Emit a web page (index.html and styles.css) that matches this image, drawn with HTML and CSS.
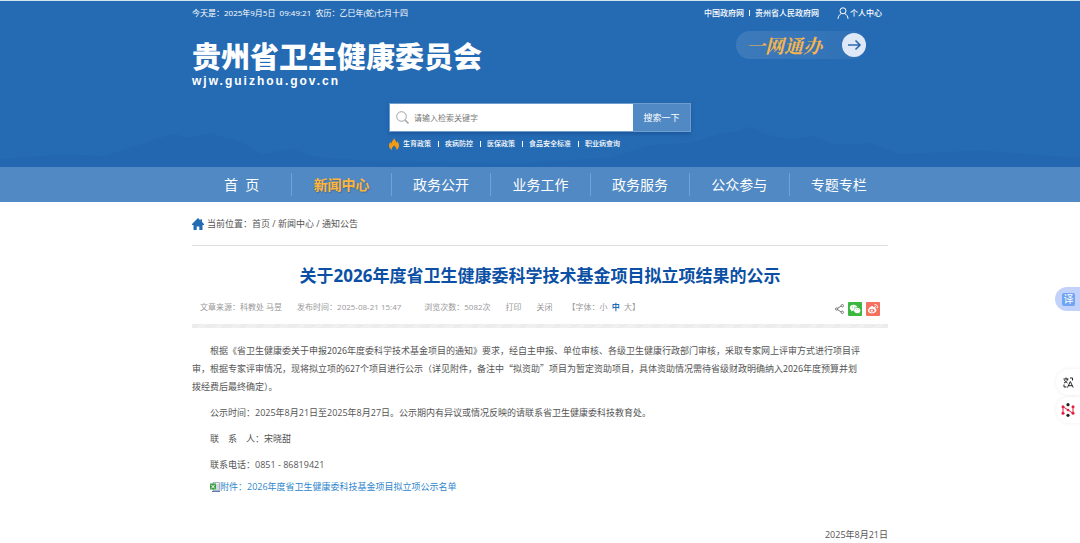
FILE: index.html
```html
<!DOCTYPE html>
<html lang="zh-CN">
<head>
<meta charset="utf-8">
<meta name="viewport" content="width=device-width, initial-scale=1">
<title>关于2026年度省卫生健康委科学技术基金项目拟立项结果的公示</title>
<link rel="stylesheet" href="styles.css">
</head>
<body>
<header class="header">
  <svg class="hills" viewBox="0 0 1080 70" preserveAspectRatio="none" aria-hidden="true">
    <path d="M0 62 L60 56 L105 58 L150 42 L172 34 L190 38 L210 33 L240 42 L262 56 L290 50 L320 60 L380 64 L520 66 L610 60 L650 46 L690 44 L720 34 L738 30 L752 26 L764 34 L790 40 L812 36 L836 46 L870 44 L900 56 L980 52 L1080 60 V70 H0 Z"/>
  </svg>
  <div class="wrap">
    <div class="topbar">
      <span>今天是：2025年9月5日&nbsp; 09:49:21&nbsp; 农历：乙巳年(蛇)七月十四</span>
      <nav class="toplinks" aria-label="相关网站">
        <a href="#">中国政府网</a><i class="bar"></i><a href="#">贵州省人民政府网</a>
        <a href="#" class="user">
          <svg width="12" height="12" viewBox="0 0 12 12" fill="none" stroke="currentColor" aria-hidden="true"><circle cx="6" cy="3.8" r="3"/><path d="M1 11.8c.2-3 2-4.600 3.400-5.200M7.600 6.600C9.600 7.400 10.900 9.200 11 11.800"/></svg>个人中心</a>
      </nav>
    </div>
    <div class="brand">
      <div>
        <div class="logo">贵州省卫生健康委员会</div>
        <div class="domain">wjw.guizhou.gov.cn</div>
      </div>
      <a href="#" class="service"><span>一网通办</span>
        <svg width="24" height="24" viewBox="0 0 24 24" fill="none" aria-hidden="true"><circle cx="12" cy="12" r="12" fill="#dfe8f6"/><path d="M6 12h12M13.500 7.500L18 12l-4.500 4.500" stroke="#2c69b0" stroke-width="1.600"/></svg>
      </a>
    </div>
    <div class="search">
      <form class="search-form">
        <label class="search-box">
          <svg width="13" height="13" viewBox="0 0 13 13" fill="none" stroke="#a0a0a0" aria-hidden="true"><circle cx="5.500" cy="5.500" r="4.800"/><path d="M9 9l3.500 3.500" stroke-width="1.400"/></svg>
          <input type="text" placeholder="请输入检索关键字" aria-label="检索关键字">
        </label>
        <button type="button">搜索一下</button>
      </form>
      <div class="hot">
        <svg width="10" height="12" viewBox="0 0 10 12" aria-hidden="true"><path fill="#f39a13" d="M5 0c.5 2 2.300 2.700 2.500 4.700.6-.3.800-.9.800-1.500C9.500 4.800 10 6.200 10 7.500c0 2-1.200 3.800-2.700 4.300.4-1.600-.8-2.900-2.200-4.300C3.700 9 2.400 10.200 2.900 11.900 1.100 11.200 0 9.600 0 7.600 0 6 .6 4.900 1.500 3.900c.1.800.4 1.300.9 1.600C2.400 3.200 4.800 2.200 5 0Z"/></svg>
        <a href="#">生育政策</a><i class="bar"></i><a href="#">疾病防控</a><i class="bar"></i><a href="#">医保政策</a><i class="bar"></i><a href="#">食品安全标准</a><i class="bar"></i><a href="#">职业病查询</a>
      </div>
    </div>
  </div>
</header>
<nav class="mainnav" aria-label="主导航">
  <div class="wrap tabs">
    <a href="#">首&nbsp; 页</a>
    <a href="#" class="active">新闻中心</a>
    <a href="#">政务公开</a>
    <a href="#">业务工作</a>
    <a href="#">政务服务</a>
    <a href="#">公众参与</a>
    <a href="#">专题专栏</a>
  </div>
</nav>
<main class="wrap">
  <div class="crumbs">
    <svg width="12" height="12" viewBox="0 0 12 12" fill="#236bb3" aria-hidden="true"><path d="M6 0l2.500 2.400V1.200H10v2.700l2 2V7h-1.500v5H7.300V8.500H4.700V12H1.500V7H0V5.900Z"/></svg>
    <span>当前位置：<a href="#">首页</a> / <a href="#">新闻中心</a> / <a href="#">通知公告</a></span>
  </div>
  <article>
    <h1>关于2026年度省卫生健康委科学技术基金项目拟立项结果的公示</h1>
    <div class="meta">
      <span>文章来源：科教处 马昱</span>
      <span class="published">发布时间：2025-08-21 15:47</span>
      <span>浏览次数：5082次</span>
      <a href="#">打印</a>
      <a href="#">关闭</a>
      <span class="sizes">【字体：<a href="#">小</a>&nbsp; <a href="#" class="current">中</a>&nbsp; <a href="#">大</a>】</span>
      <div class="share">
        <svg width="9" height="10" viewBox="0 0 9 10" fill="none" stroke="#777" aria-label="分享" role="img"><path d="M6.200 2L2.500 4.400M2.500 5.600L6.200 8"/><circle cx="1.700" cy="5" r="1.200"/><circle cx="7.300" cy="1.700" r="1.200"/><circle cx="7.300" cy="8.300" r="1.200"/></svg>
        <a href="#" aria-label="微信"><svg width="14" height="14" viewBox="0 0 14 14" aria-hidden="true"><rect width="14" height="14" rx="1" fill="#3bb83f"/><path fill="#fff" d="M5.600 2.800C3.500 2.800 1.800 4.100 1.800 5.800c0 1 .5 1.800 1.400 2.400L2.900 9.400l1.400-.7c.5.100.8.200 1.300.2 0-2.200 1.700-3.500 3.800-3.600C9 3.800 7.500 2.800 5.600 2.800Z"/><path fill="#fff" d="M9.200 5.800c1.900 0 3.300 1.200 3.300 2.700 0 .8-.4 1.500-1.100 2l.3 1.100-1.200-.6c-2.300.6-4.500-.7-4.500-2.500 0-1.500 1.400-2.700 3.200-2.700Z"/><g fill="#3bb83f"><circle cx="4.300" cy="4.900" r=".5"/><circle cx="6.900" cy="4.900" r=".5"/><circle cx="8.200" cy="7.700" r=".4"/><circle cx="10.300" cy="7.700" r=".4"/></g></svg></a>
        <a href="#" aria-label="微博"><svg width="14" height="14" viewBox="0 0 14 14" aria-hidden="true"><rect width="14" height="14" rx="1" fill="#f5705f"/><path fill="#fff" d="M5.900 4.100c.9-.3 1.500.2 1.200 1.300 1.500-.6 2.600-.2 2.200 1 2.500.9 1 4.700-3.400 4.900-2.300 0-3.900-1.100-3.900-2.600 0-1.700 2.300-4.200 3.900-4.600Z"/><ellipse cx="6" cy="8.600" rx="2.700" ry="1.800" fill="#f5705f"/><circle cx="5.800" cy="8.700" r="1.100" fill="#fff"/><path d="M8.500 2.700c2.100-.4 3.700 1.200 3.100 3.400M8.800 4.400c1.100-.1 1.600.5 1.300 1.400" fill="none" stroke="#fff" stroke-width=".9"/></svg></a>
      </div>
    </div>
    <div class="hatch"></div>
    <div class="body">
      <p class="lead">根据《省卫生健康委关于申报2026年度委科学技术基金项目的通知》要求，经自主申报、单位审核、各级卫生健康行政部门审核，采取专家网上评审方式进行项目评审，根据专家评审情况，现将拟立项的627个项目进行公示（详见附件，备注中“拟资助”项目为暂定资助项目，具体资助情况需待省级财政明确纳入2026年度预算并划拨经费后最终确定）。</p>
      <p>公示时间：2025年8月21日至2025年8月27日。公示期内有异议或情况反映的请联系省卫生健康委科技教育处。</p>
      <p>联　系　人：宋晓甜</p>
      <p>联系电话：0851 - 86819421</p>
      <a href="#" class="file"><svg width="10" height="10" viewBox="0 0 10 10" aria-hidden="true"><path d="M3 .5h6.500v8H3Z" fill="#f3f7fb" stroke="#7f93a8" stroke-width=".7"/><path d="M6 3h3M6 5h3M6 7h3" stroke="#8aa0b4" stroke-width=".7"/><rect y="1.500" width="6" height="6" fill="#3b9b3f"/><path d="M1.300 2.800l3.400 3.600M4.700 2.800L1.300 6.400" stroke="#fff"/><path d="M2 9.500h8" stroke="#5a7fb0"/></svg>附件：2026年度省卫生健康委科技基金项目拟立项公示名单</a>
      <time datetime="2025-08-21">2025年8月21日</time>
    </div>
  </article>
</main>
<button type="button" class="float translate" aria-label="翻译"><span>译</span></button>
<div class="float tools">
  <button type="button" aria-label="切换语言"><svg width="11" height="11" viewBox="0 0 11 11" fill="none" stroke="#222" aria-hidden="true"><path d="M.5 2h5M3 .5V2M1 6c2-.8 3.300-2 3.700-4M1.300 2.800C2 4.500 3 5.300 4.500 6M7 1h2.500v2.500M1 7.500V10h2.500M4.500 10.500L7.300 4.500l2.900 6M5.500 8.700h3.600"/></svg></button>
  <button type="button" aria-label="助手"><svg width="14" height="14" viewBox="0 0 14 14" aria-hidden="true"><path d="M2 10.500V3.700l10 6.600V3.500" fill="none" stroke="#e2213f"/><g fill="#e2213f"><circle cx="2" cy="3.700" r="1.500"/><circle cx="2" cy="10.300" r="1.500"/><circle cx="7" cy="7" r="1.300"/><circle cx="12" cy="3.700" r="1.500"/><circle cx="12" cy="10.300" r="1.500"/></g><circle cx="7" cy="1.700" r="1.600" fill="#222"/><circle cx="7" cy="12.300" r="1.600" fill="#222"/></svg></button>
</div>
</body>
</html>
```

FILE: styles.css
```css
* { box-sizing: border-box; }
body {
  margin: 0;
  background: #fff;
  color: #555;
  font: 9px/18px "Open Sans", "Noto Sans CJK SC", sans-serif;
}
a { color: inherit; text-decoration: none; }
button { border: 0; padding: 0; font: inherit; cursor: pointer; }
svg { display: block; flex: none; }
.wrap { max-width: 696px; margin: 0 auto; }

.header {
  position: relative;
  border-top: 1px solid #cfe6f2;
  background: #256bb3;
  color: #fff;
  padding-bottom: 15px;
}
.header .wrap { position: relative; }
.hills {
  position: absolute;
  left: 0;
  bottom: 0;
  width: 100%;
  height: 64px;
  fill: #1f62aa;
  opacity: .4;
}
.topbar {
  display: flex;
  justify-content: space-between;
  padding: 4px 6px 0 0;
  font-size: 8px;
  line-height: 16px;
}
.toplinks { display: flex; align-items: center; font-weight: 500; }
.bar { width: 1px; height: 6px; margin: 0 5px; background: currentColor; }
.user { display: flex; align-items: center; gap: 1px; margin-left: 18px; }

.brand {
  display: flex;
  justify-content: space-between;
  align-items: flex-start;
  padding: 10px 22px 0 0;
}
.logo {
  padding-top: 3px;
  font-size: 29px;
  line-height: 42px;
  font-weight: 900;
  font-family: "Noto Sans CJK SC", sans-serif;
}
.domain {
  font: bold 12px/10px "Liberation Sans", sans-serif;
  letter-spacing: 2px;
}
.service {
  display: flex;
  align-items: center;
  justify-content: space-between;
  width: 130px;
  height: 28px;
  padding: 0 0 0 10px;
  border-radius: 14px;
  background: linear-gradient(90deg, #3d7abb, #2f71b6);
  color: #f5b44c;
  font: italic bold 19px/26px "Noto Serif CJK SC", "Noto Sans CJK SC", serif;
}

.search { width: 302px; margin: 17px auto 0; }
.search-form {
  display: flex;
  height: 29px;
  border: 1px solid #6f9dcd;
  box-shadow: 0 2px 4px #1c579a;
}
.search-box {
  display: flex;
  flex: 1;
  align-items: center;
  gap: 5px;
  padding-left: 6px;
  background: #fff;
}
.search-box input {
  flex: 1;
  min-width: 0;
  border: 0;
  padding: 0;
  outline: 0;
  background: none;
  font: inherit;
  font-size: 8px;
}
.search-box input::placeholder { color: #777; }
.search-form button { width: 57px; background: #5089c3; color: #fff; }
.hot {
  display: flex;
  align-items: center;
  margin-top: 4px;
  font-size: 7px;
  line-height: 16px;
  font-weight: 500;
}
.hot svg { margin-right: 4px; }
.hot .bar { margin: 0 6px 0 7px; }

.mainnav { background: #5089c3; color: #fff; }
.tabs { display: grid; grid-template-columns: repeat(7, 1fr); padding: 6px 0; }
.tabs a { font-size: 14px; line-height: 23px; text-align: center; }
.tabs a + a { border-left: 1px solid #6da3d6; }
.tabs .active {
  color: #ffb53c;
  font-weight: 700;
  text-shadow: 1px 1px 1px #4a6c92;
}

.crumbs {
  display: flex;
  align-items: center;
  gap: 3px;
  padding: 13px 0 12px;
  border-bottom: 1px solid #ddd;
}
h1 {
  margin: 17px 0 0;
  color: #0b50a4;
  font-size: 17px;
  line-height: 26px;
  font-weight: 700;
  text-align: center;
}
.meta {
  display: flex;
  align-items: center;
  gap: 15px;
  margin-top: 9px;
  padding: 0 8px 8px;
  color: #999;
  font-size: 8px;
}
.published { padding-right: 8px; }
.current { color: #1a6cb8; font-weight: 700; }
.share { display: flex; align-items: center; gap: 4px; margin-left: auto; padding-top: 4px; }
.hatch {
  height: 4px;
  background: repeating-linear-gradient(135deg, #e9e9e9 0 1px, #f3f3f3 1px 2px);
}

.body { padding-top: 14px; }
.body p { margin: 0 0 8px; text-indent: 2em; }
.body .lead {
  padding-right: 24px;
  font-family: "Noto Sans CJK SC", sans-serif;
}
.file {
  display: flex;
  align-items: center;
  width: fit-content;
  margin: -4px 0 0 18px;
  color: #2f86cc;
}
time { display: block; margin-top: 31px; line-height: 16px; text-align: right; }

.float { position: fixed; right: 0; }
.translate {
  top: 287px;
  width: 25px;
  height: 24px;
  padding-left: 7px;
  border-radius: 12px 0 0 12px;
  background: #c3d2fb;
}
.translate span {
  display: block;
  width: 13px;
  border-radius: 2px;
  background: #6fa5f2;
  color: #fff;
  font-size: 10px;
  line-height: 13px;
}
.tools { top: 369px; display: grid; gap: 2px; justify-items: end; }
.tools button {
  display: grid;
  place-items: center;
  width: 24px;
  height: 26px;
  border-radius: 13px 0 0 13px;
  background: #fff;
  box-shadow: 0 0 4px #eee;
}
```
